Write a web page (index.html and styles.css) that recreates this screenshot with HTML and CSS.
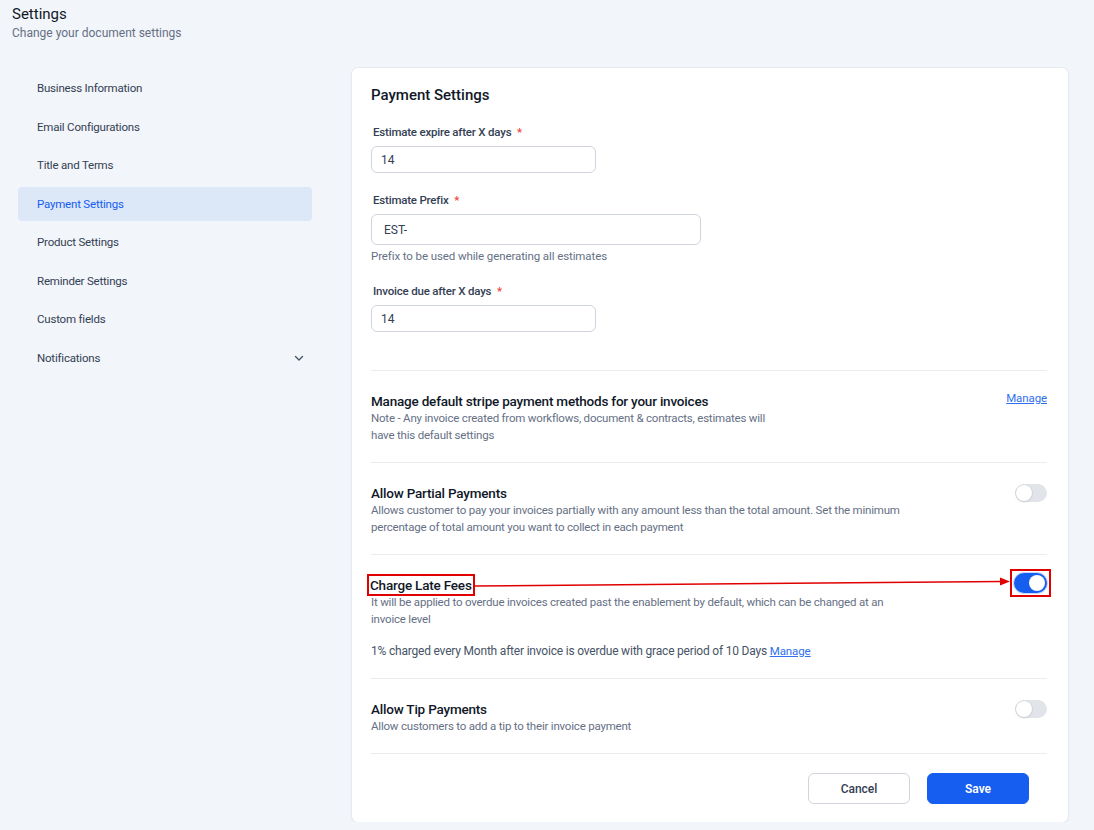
FILE: index.html
```html
<!DOCTYPE html>
<html lang="en">
<head>
  <meta charset="UTF-8">
  <meta name="viewport" content="width=device-width, initial-scale=1.0">
  <title>Settings - Payment Settings</title>
  <link rel="stylesheet" href="styles.css">
</head>
<body>
  <div class="page">
    <header class="page-head">
      <h1>Settings</h1>
      <p>Change your document settings</p>
    </header>

    <div class="layout">
      <nav class="side-nav">
        <a class="nav-item">Business Information</a>
        <a class="nav-item">Email Configurations</a>
        <a class="nav-item">Title and Terms</a>
        <a class="nav-item active">Payment Settings</a>
        <a class="nav-item">Product Settings</a>
        <a class="nav-item">Reminder Settings</a>
        <a class="nav-item">Custom fields</a>
        <a class="nav-item">
          Notifications
          <svg class="chevron" width="12" height="12" viewBox="0 0 12 12"><path d="M2.5 4.5 6 8l3.5-3.5" fill="none" stroke="#475467" stroke-width="1.4" stroke-linecap="round" stroke-linejoin="round"/></svg>
        </a>
      </nav>

      <main class="card">
        <h2>Payment Settings</h2>

        <div class="fields">
          <div class="field">
            <label>Estimate expire after X days <span class="req">*</span></label>
            <input class="input" type="text" value="14">
          </div>
          <div class="field">
            <label>Estimate Prefix <span class="req">*</span></label>
            <input class="input wide" type="text" value="EST-">
            <div class="help">Prefix to be used while generating all estimates</div>
          </div>
          <div class="field">
            <label>Invoice due after X days <span class="req">*</span></label>
            <input class="input" type="text" value="14">
          </div>
        </div>

        <section class="setting">
          <div class="setting-head">
            <div class="setting-title">Manage default stripe payment methods for your invoices</div>
            <a class="link">Manage</a>
          </div>
          <div class="setting-desc">Note - Any invoice created from workflows, document &amp; contracts, estimates will<br>have this default settings</div>
        </section>

        <section class="setting">
          <div class="setting-head">
            <div class="setting-title">Allow Partial Payments</div>
            <span class="toggle"></span>
          </div>
          <div class="setting-desc">Allows customer to pay your invoices partially with any amount less than the total amount. Set the minimum<br>percentage of total amount you want to collect in each payment</div>
        </section>

        <section class="setting">
          <div class="setting-head">
            <div class="setting-title"><span class="mark">Charge Late Fees</span></div>
            <span class="mark-box"><span class="toggle on"></span></span>
            <svg class="arrow" width="676" height="20" viewBox="0 0 676 20">
              <line x1="103" y1="10" x2="631" y2="5.5" stroke="#e00000" stroke-width="1.5"/>
              <polygon points="629,1.5 639,5.4 629,9.5" fill="#e00000"/>
            </svg>
          </div>
          <div class="setting-desc">It will be applied to overdue invoices created past the enablement by default, which can be changed at an<br>invoice level</div>
          <div class="setting-note">1% charged every Month after invoice is overdue with grace period of 10 Days <a class="link">Manage</a></div>
        </section>

        <section class="setting">
          <div class="setting-head">
            <div class="setting-title">Allow Tip Payments</div>
            <span class="toggle"></span>
          </div>
          <div class="setting-desc">Allow customers to add a tip to their invoice payment</div>
        </section>

        <footer class="card-foot">
          <button class="btn btn-cancel">Cancel</button>
          <button class="btn btn-save">Save</button>
        </footer>
      </main>
    </div>
  </div>
</body>
</html>
```

FILE: styles.css
```css
:root {
  --primary: #155EEF;
  --link: #2F6FED;
  --text-primary: #101828;
  --text-secondary: #344054;
  --text-muted: #667085;
  --border: #D0D5DD;
  --divider: #EAECF0;
  --background: #F2F5F9;
}

body {
  margin: 0;
  background-color: var(--background);
  font-family: Roboto, "Liberation Sans", sans-serif;
  color: var(--text-primary);
}

.page {
  padding: 4px 26px 0 12px;
}

.page-head h1 {
  margin: 0;
  font-size: 15px;
  line-height: 20px;
  font-weight: 400;
}

.page-head p {
  margin: 1px 0 0;
  font-size: 12px;
  line-height: 16px;
  color: var(--text-muted);
}

.layout {
  display: flex;
  gap: 40px;
  margin-top: 27px;
}

/* sidebar */

.side-nav {
  width: 294px;
  margin-left: 6px;
  padding-top: 3px;
  display: flex;
  flex-direction: column;
  gap: 4.5px;
}

.nav-item {
  height: 34px;
  display: flex;
  align-items: center;
  justify-content: space-between;
  padding: 0 7px 0 19px;
  font-size: 11.5px;
  letter-spacing: -0.2px;
  color: var(--text-secondary);
  border-radius: 4px;
  cursor: pointer;
}

.nav-item.active {
  background-color: #DCE7F8;
  color: var(--primary);
}

/* card */

.card {
  flex: 0 0 716px;
  box-sizing: border-box;
  background-color: #FFFFFF;
  border-radius: 6px;
  box-shadow: 0 0 0 1px #E6EAF0, 0 1px 3px rgba(16, 24, 40, 0.08);
  padding: 17px 21px 18px 19px;
}

.card h2 {
  margin: 0 0 19px;
  font-size: 15px;
  line-height: 20px;
  font-weight: 500;
}

.fields {
  margin-bottom: 38px;
}

.field + .field {
  margin-top: 19px;
}

.field label {
  display: block;
  padding-left: 2px;
  margin-bottom: 6px;
  font-size: 11.5px;
  line-height: 16px;
  font-weight: 500;
  letter-spacing: -0.2px;
  color: var(--text-secondary);
}

.req {
  color: #F04438;
  margin-left: 3px;
}

.input {
  display: block;
  width: 225px;
  height: 27px;
  box-sizing: border-box;
  border: 1px solid var(--border);
  border-radius: 6px;
  padding: 0 9px;
  font-family: inherit;
  font-size: 12px;
  color: var(--text-secondary);
  outline: none;
}

.input.wide {
  width: 330px;
  height: 31px;
  padding: 0 12px;
}

.help {
  margin-top: 3px;
  font-size: 11.5px;
  line-height: 16px;
  letter-spacing: -0.1px;
  color: var(--text-muted);
}

/* setting rows */

.setting {
  border-top: 1px solid var(--divider);
  padding: 21px 0 18px;
}

.setting-head {
  position: relative;
  display: flex;
  justify-content: space-between;
  align-items: flex-start;
}

.setting-title {
  font-size: 13.5px;
  line-height: 18px;
  font-weight: 500;
  letter-spacing: -0.2px;
  color: var(--text-primary);
}

.setting-desc {
  font-size: 11.5px;
  line-height: 17px;
  letter-spacing: -0.2px;
  color: var(--text-muted);
}

.setting-note {
  margin-top: 15px;
  font-size: 12px;
  line-height: 17px;
  letter-spacing: -0.2px;
  color: #475467;
}

.link {
  font-size: 11.5px;
  letter-spacing: -0.1px;
  color: var(--link);
  text-decoration: underline;
  cursor: pointer;
}

.setting-head .link {
  margin-top: -1px;
}

/* toggle */

.toggle {
  position: relative;
  display: block;
  flex: none;
  width: 32px;
  height: 18px;
  border-radius: 9px;
  background-color: #E1E4E8;
}

.toggle::after {
  content: "";
  position: absolute;
  top: 1px;
  left: 1px;
  width: 16px;
  height: 16px;
  border-radius: 50%;
  background-color: #FFFFFF;
  box-shadow: 0 0 0 0.5px #C8CDD4, 0 1px 2px rgba(16, 24, 40, 0.15);
}

.toggle.on {
  width: 33px;
  height: 20px;
  border-radius: 10px;
  background-color: var(--primary);
  box-shadow: 0 0 0 1px #C9D8FB;
}

.toggle.on::after {
  top: 2px;
  left: 15px;
  box-shadow: none;
}

/* screenshot annotation */

.mark {
  display: inline-block;
  padding: 0 1px;
  margin-left: -2px;
  outline: 2px solid #E00000;
  outline-offset: 0;
}

.mark-box {
  display: block;
  flex: none;
  margin-top: -3px;
  outline: 2px solid #E00000;
  outline-offset: 2px;
}

.arrow {
  position: absolute;
  left: 0;
  top: 0;
  overflow: visible;
  pointer-events: none;
}

/* footer */

.card-foot {
  border-top: 1px solid var(--divider);
  padding: 19px 18px 0 0;
  display: flex;
  justify-content: flex-end;
  gap: 17px;
}

.btn {
  width: 102px;
  height: 31px;
  border-radius: 6px;
  font-family: inherit;
  font-size: 12px;
  font-weight: 500;
  cursor: pointer;
}

.btn-cancel {
  background-color: #FFFFFF;
  border: 1px solid var(--border);
  color: var(--text-secondary);
}

.btn-save {
  background-color: var(--primary);
  border: 1px solid var(--primary);
  color: #FFFFFF;
  font-weight: 600;
}
```
